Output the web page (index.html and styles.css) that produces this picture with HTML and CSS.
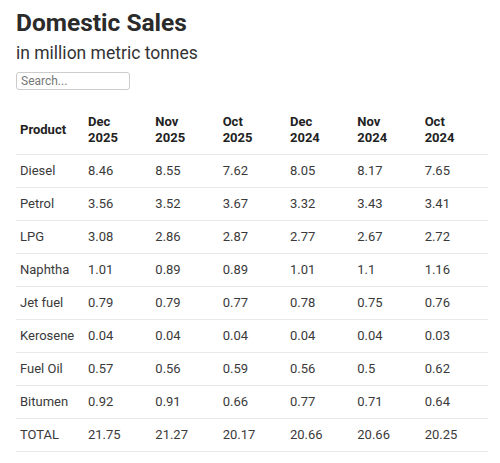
FILE: index.html
```html
<!DOCTYPE html>
<html lang="en">
<head>
    <meta charset="UTF-8">
    <meta name="viewport" content="width=device-width, initial-scale=1.0">
    <title>Domestic Sales</title>
    <link rel="stylesheet" href="styles.css">
</head>
<body>
    <h1>Domestic Sales</h1>
    <h2>in million metric tonnes</h2>
    <input class="search" type="text" placeholder="Search...">

    <table class="sales">
        <thead>
            <tr>
                <th>Product</th>
                <th>Dec<br>2025</th>
                <th>Nov<br>2025</th>
                <th>Oct<br>2025</th>
                <th>Dec<br>2024</th>
                <th>Nov<br>2024</th>
                <th>Oct<br>2024</th>
            </tr>
        </thead>
        <tbody>
            <tr><td>Diesel</td><td>8.46</td><td>8.55</td><td>7.62</td><td>8.05</td><td>8.17</td><td>7.65</td></tr>
            <tr><td>Petrol</td><td>3.56</td><td>3.52</td><td>3.67</td><td>3.32</td><td>3.43</td><td>3.41</td></tr>
            <tr><td>LPG</td><td>3.08</td><td>2.86</td><td>2.87</td><td>2.77</td><td>2.67</td><td>2.72</td></tr>
            <tr><td>Naphtha</td><td>1.01</td><td>0.89</td><td>0.89</td><td>1.01</td><td>1.1</td><td>1.16</td></tr>
            <tr><td>Jet fuel</td><td>0.79</td><td>0.79</td><td>0.77</td><td>0.78</td><td>0.75</td><td>0.76</td></tr>
            <tr><td>Kerosene</td><td>0.04</td><td>0.04</td><td>0.04</td><td>0.04</td><td>0.04</td><td>0.03</td></tr>
            <tr><td>Fuel Oil</td><td>0.57</td><td>0.56</td><td>0.59</td><td>0.56</td><td>0.5</td><td>0.62</td></tr>
            <tr><td>Bitumen</td><td>0.92</td><td>0.91</td><td>0.66</td><td>0.77</td><td>0.71</td><td>0.64</td></tr>
            <tr><td>TOTAL</td><td>21.75</td><td>21.27</td><td>20.17</td><td>20.66</td><td>20.66</td><td>20.25</td></tr>
        </tbody>
    </table>
</body>
</html>
```

FILE: styles.css
```css
body {
    font-family: Roboto, "Open Sans", Arial, sans-serif;
    color: #3a3a3a;
    margin: 0;
    padding: 8px 16px;
    background: #fff;
}

h1 {
    font-size: 24.5px;
    font-weight: 700;
    color: #2b2b2b;
    margin: 0;
    line-height: 30px;
}

h2 {
    font-size: 17.5px;
    font-weight: 400;
    color: #333;
    margin: 4px 0 8px;
    line-height: 22px;
}

.search {
    display: block;
    width: 114px;
    height: 18px;
    box-sizing: border-box;
    border: 1px solid #ccc;
    border-radius: 3px;
    padding: 0 4px;
    font-family: inherit;
    font-size: 12px;
    color: #555;
}

.search::placeholder { color: #777; }

.sales {
    width: 472px;
    border-collapse: collapse;
    margin-top: 16px;
    font-size: 13px;
}

.sales th,
.sales td {
    text-align: left;
    padding: 8px 4px;
    line-height: 16px;
    border-bottom: 1px solid #e8e8e8;
}

.sales th {
    font-weight: 700;
    color: #222;
}

.sales td:first-child,
.sales th:first-child { width: 60px; }
```
